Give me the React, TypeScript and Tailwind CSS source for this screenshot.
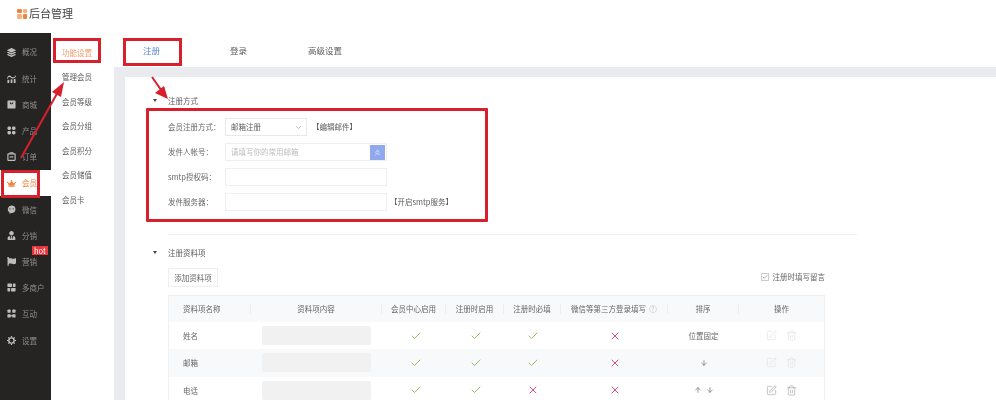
import { Check, ChevronDown, SquarePen, Trash2, X, ArrowUp, ArrowDown, ChevronsUp } from "lucide-react";
import { FaLayerGroup, FaCrown, FaFlag, FaUserTie } from "react-icons/fa";

type IconProps = { className?: string };

function ChartIcon({ className }: IconProps) {
  return (
    <svg className={className} viewBox="0 0 10 10" fill="currentColor">
      <path d="M0 4.5 C1.5 1 3 1 5 3 C7 4.5 8.5 3 10 1 V2.6 C8.5 5 6.5 6 4.6 4.2 C3 2.8 1.6 3 0 6 Z" />
      <rect x="0.5" y="6.5" width="2" height="3.5" />
      <rect x="4" y="6" width="2" height="4" />
      <rect x="7.5" y="5.5" width="2" height="4.5" />
    </svg>
  );
}

function StoreIcon({ className }: IconProps) {
  return (
    <svg className={className} viewBox="0 0 10 10" fill="currentColor">
      <path d="M1.5 0.5 H8.5 A1 1 0 0 1 9.5 1.5 V8.5 A1 1 0 0 1 8.5 9.5 H1.5 A1 1 0 0 1 0.5 8.5 V1.5 A1 1 0 0 1 1.5 0.5 Z M3 2.5 C3 5.5 7 5.5 7 2.5 H6 C6 4.2 4 4.2 4 2.5 Z" fillRule="evenodd" />
    </svg>
  );
}

function ProductIcon({ className }: IconProps) {
  return (
    <svg className={className} viewBox="0 0 10 10" fill="currentColor">
      <rect x="0.5" y="0.5" width="4" height="4" rx="1.6" />
      <rect x="5.5" y="0.5" width="4" height="4" rx="1.6" />
      <rect x="0.5" y="5.5" width="4" height="4" rx="1.6" />
      <rect x="5.5" y="5.5" width="4" height="4" rx="1.6" />
    </svg>
  );
}

function OrderIcon({ className }: IconProps) {
  return (
    <svg className={className} viewBox="0 0 10 10" fill="none" stroke="currentColor" strokeWidth="1.3">
      <rect x="1" y="2" width="8" height="7.3" rx="0.6" />
      <path d="M3.5 2 V0.8 H6.5 V2" />
      <path d="M3 5.5 H7" />
    </svg>
  );
}

function WechatIcon({ className }: IconProps) {
  return (
    <svg className={className} viewBox="0 0 10 10" fill="currentColor">
      <path
        d="M5 0.6 A4.4 4.1 0 0 1 5 8.8 L2.6 9.6 L2.8 8.1 A4.4 4.1 0 0 1 5 0.6 Z M3.2 3.6 A0.7 0.7 0 1 0 3.2 5 A0.7 0.7 0 1 0 3.2 3.6 Z M6.8 3.6 A0.7 0.7 0 1 0 6.8 5 A0.7 0.7 0 1 0 6.8 3.6 Z"
        fillRule="evenodd"
      />
    </svg>
  );
}

function MerchantIcon({ className }: IconProps) {
  return (
    <svg className={className} viewBox="0 0 10 10" fill="currentColor">
      <rect x="0.5" y="0.5" width="5" height="4" rx="0.5" />
      <rect x="6.5" y="0.5" width="3" height="4" rx="0.5" />
      <rect x="0.5" y="5.5" width="3" height="4" rx="0.5" />
      <rect x="4.5" y="5.5" width="5" height="4" rx="0.5" />
    </svg>
  );
}

function InteractIcon({ className }: IconProps) {
  return (
    <svg className={className} viewBox="0 0 10 10" fill="currentColor">
      <rect x="0.5" y="0.5" width="3.6" height="3.8" rx="1" />
      <rect x="5.9" y="0.5" width="3.6" height="3.8" rx="1" />
      <rect x="0.5" y="5.7" width="3.6" height="3.8" rx="0.6" />
      <rect x="5.9" y="5.7" width="3.6" height="3.8" rx="0.6" />
      <rect x="3.5" y="6.8" width="3" height="1.4" />
    </svg>
  );
}

function GearIcon({ className }: IconProps) {
  return (
    <svg className={className} viewBox="0 0 10 10" fill="none" stroke="currentColor">
      <circle cx="5" cy="5" r="2.9" strokeWidth="1.6" />
      <path d="M5 0 V1.6 M5 8.4 V10 M0 5 H1.6 M8.4 5 H10 M1.5 1.5 L2.6 2.6 M7.4 7.4 L8.5 8.5 M8.5 1.5 L7.4 2.6 M2.6 7.4 L1.5 8.5" strokeWidth="1.3" />
    </svg>
  );
}

const menu = [
  { label: "概况", icon: FaLayerGroup },
  { label: "统计", icon: ChartIcon },
  { label: "商城", icon: StoreIcon },
  { label: "产品", icon: ProductIcon },
  { label: "订单", icon: OrderIcon },
  { label: "会员", icon: FaCrown, active: true },
  { label: "微信", icon: WechatIcon },
  { label: "分销", icon: FaUserTie },
  { label: "营销", icon: FaFlag, hot: true },
  { label: "多商户", icon: MerchantIcon },
  { label: "互动", icon: InteractIcon },
  { label: "设置", icon: GearIcon },
];

const subMenu = ["功能设置", "管理会员", "会员等级", "会员分组", "会员积分", "会员储值", "会员卡"];

const columns = "grid grid-cols-[82px_131px_64px_58px_57px_107px_71px_85px]";

const headers = ["资料项名称", "资料项内容", "会员中心启用", "注册时启用", "注册时必填", "微信等第三方登录填写", "排序", "操作"];

const rows = [
  { name: "姓名", marks: [true, true, true, false], sort: "位置固定", faded: true },
  { name: "邮箱", marks: [true, true, true, false], sort: "down", faded: true },
  { name: "电话", marks: [true, true, false, false], sort: "both", faded: false },
];

function Mark({ ok }: { ok: boolean }) {
  return (
    <div className="flex justify-center">
      {ok ? (
        <Check className="h-3 w-3 text-[#85b84e]" strokeWidth={1.75} />
      ) : (
        <X className="h-3 w-3 text-[#d9346b]" strokeWidth={1.75} />
      )}
    </div>
  );
}

function Logo() {
  return (
    <div className="grid grid-cols-2 gap-[1px] w-[10px]">
      <span className="h-[4.5px] w-[4.5px] rounded-[1px] bg-[#f0843e]" />
      <span className="h-[4.5px] w-[4.5px] rounded-[1px] bg-[#f5b183]" />
      <span className="h-[4.5px] w-[4.5px] rounded-[1px] bg-[#f5b183]" />
      <span className="h-[4.5px] w-[4.5px] rounded-[1px] bg-[#f0843e]" />
    </div>
  );
}

function Sidebar() {
  return (
    <div className="w-[51px] bg-[#262422] pt-[6px] shrink-0">
      {menu.map((item) => {
        const Icon = item.icon;
        return (
          <div
            key={item.label}
            className={
              "relative h-[26.2px] flex items-center pl-[7px] gap-[6px] text-[7.5px] " +
              (item.active ? "bg-white text-[#f0803c]" : "text-[#8f8f8f]")
            }
          >
            <Icon className={"h-[9px] w-[9px] shrink-0 " + (item.active ? "text-[#f0803c]" : "text-[#bdbdbd]")} />
            <span className="whitespace-nowrap">{item.label}</span>
            {item.hot && (
              <span className="absolute left-[32px] top-[-3px] h-[9px] px-[2px] bg-[#e8363f] text-white text-[7.5px] leading-[9px]">
                hot
              </span>
            )}
          </div>
        );
      })}
    </div>
  );
}

function SubMenu() {
  return (
    <div className="w-[63px] bg-white pt-[7px] shrink-0">
      {subMenu.map((label, i) => (
        <div
          key={label}
          className={
            "h-[24.5px] flex items-center pl-[11px] text-[7.5px] " +
            (i === 0 ? "text-[#f59a68]" : "text-[#5c5c5c]")
          }
        >
          {label}
        </div>
      ))}
    </div>
  );
}

function FormRow({ label, children }: { label: string; children: React.ReactNode }) {
  return (
    <div className="flex items-center h-[18px]">
      <span className="w-[57px] shrink-0 text-[#666666] whitespace-nowrap">{label}</span>
      {children}
    </div>
  );
}

function SectionTitle({ title }: { title: string }) {
  return (
    <div className="relative flex items-center h-[12px] text-[#5c5c5c]">
      <span className="absolute left-[-15px] top-[4px] h-0 w-0 border-x-[2.5px] border-t-[3px] border-x-transparent border-t-[#444444]" />
      {title}
    </div>
  );
}

function RegisterMethod() {
  return (
    <div className="pl-[43px] pr-[139px]">
      <SectionTitle title="注册方式" />
      <div className="mt-[11px] flex flex-col gap-[7px] pb-[23px] border-b border-[#f0f0f0]">
        <FormRow label="会员注册方式：">
          <div className="w-[82px] h-[18px] border border-[#e8e8e8] flex items-center justify-between pl-[5px] pr-[3px] text-[#5c5c5c]">
            邮箱注册
            <ChevronDown className="h-[9px] w-[9px] text-[#aaaaaa]" />
          </div>
          <span className="ml-[5px] text-[#5c5c5c]">【编辑邮件】</span>
        </FormRow>
        <FormRow label="发件人帐号：">
          <div className="w-[162px] h-[18px] border border-[#eeeeee] flex items-center justify-between pl-[5px] text-[#bdbdbd]">
            请填写你的常用邮箱
            <span className="h-[15px] w-[15px] mr-[1px] bg-[#8fa8ee] flex items-center justify-center">
              <ChevronsUp className="h-[9px] w-[9px] text-white" />
            </span>
          </div>
        </FormRow>
        <FormRow label="smtp授权码：">
          <div className="w-[162px] h-[18px] border border-[#eeeeee]" />
        </FormRow>
        <FormRow label="发件服务器：">
          <div className="w-[162px] h-[18px] border border-[#eeeeee]" />
          <span className="ml-[3px] text-[#5c5c5c]">【开启smtp服务】</span>
        </FormRow>
      </div>
    </div>
  );
}

function Table() {
  return (
    <div className="mt-[8px] border border-[#f0f0f0]">
      <div className={columns + " h-[26px] bg-[#f8f9fb] items-center text-[#666666]"}>
        {headers.map((h, i) => (
          <div
            key={h}
            className={
              "flex items-center gap-[3px] h-[10px] border-r border-[#eeeeee] last:border-r-0 whitespace-nowrap " +
              (i === 0 ? "pl-[14px]" : "justify-center")
            }
          >
            {h}
            {i === 5 && (
              <span className="h-[8px] w-[8px] rounded-full border border-[#dddddd] text-[6px] leading-[6px] text-center text-[#bbbbbb]">
                ?
              </span>
            )}
          </div>
        ))}
      </div>
      {rows.map((row, r) => (
        <div key={row.name} className={columns + " h-[27.3px] items-center " + (r === 1 ? "bg-[#f8f9fb]" : "bg-white")}>
          <div className="pl-[14px] text-[#666666]">{row.name}</div>
          <div className="pl-[11px]">
            <div className="h-[19px] w-[109px] rounded-[2px] bg-[#f1f1f1]" />
          </div>
          {row.marks.map((ok, i) => (
            <div key={i} className={i === 0 ? "pl-[3px]" : i === 1 ? "pl-[2px]" : ""}>
              <Mark ok={ok} />
            </div>
          ))}
          <div className="flex justify-center items-center gap-[4px] text-[#666666]">
            {row.sort === "both" && <ArrowUp className="h-[8px] w-[8px]" />}
            {row.sort === "down" || row.sort === "both" ? <ArrowDown className="h-[8px] w-[8px]" /> : row.sort}
          </div>
          <div className={"flex justify-center gap-[9px] " + (row.faded ? "text-[#dddddd]" : "text-[#9a9a9a]")}>
            <SquarePen className="h-[11px] w-[11px]" strokeWidth={1.25} />
            <Trash2 className="h-[11px] w-[11px]" strokeWidth={1.25} />
          </div>
        </div>
      ))}
    </div>
  );
}

function Annotations() {
  return (
    <div className="absolute inset-0 pointer-events-none">
      <div className="absolute left-[53px] top-[38px] w-[48px] h-[25px] border-[3px] border-[#d7202c]" />
      <div className="absolute left-[1px] top-[170px] w-[39px] h-[28px] border-[3px] border-[#d7202c]" />
      <div className="absolute left-[123px] top-[38px] w-[59px] h-[28px] border-[3px] border-[#d7202c]" />
      <div className="absolute left-[146px] top-[108px] w-[342px] h-[114px] border-[3px] border-[#d7202c] rounded-[1px]" />
      <svg className="absolute inset-0" width="996" height="400" viewBox="0 0 996 400">
        <path d="M21 158 L59 90" stroke="#d7202c" strokeWidth="2" fill="none" />
        <path d="M64 82 L61 97 L52 92 Z" fill="#d7202c" />
        <path d="M152 77 L164 94" stroke="#d7202c" strokeWidth="2" fill="none" />
        <path d="M168 99 L155 93 L164 86 Z" fill="#d7202c" />
      </svg>
    </div>
  );
}

export default function App() {
  return (
    <div className="relative h-[400px] w-[996px] overflow-hidden bg-white blur-[0.35px] font-['Noto_Sans_CJK_SC','Liberation_Sans',sans-serif] text-[7.5px]">
      {/* Header */}
      <div className="h-[33px] flex items-center gap-[2px] pl-[17px] pb-[6px] text-[11px] text-[#444444]">
        <Logo />
        后台管理
      </div>

      <div className="flex h-[367px]">
        <Sidebar />
        <SubMenu />

        <div className="flex-1 min-w-0 bg-[#e9ebee]">
          {/* Tabs */}
          <div className="h-[34px] bg-white flex items-center text-[8.5px] text-[#5c5c5c]">
            <span className="ml-[29px] text-[#5b86d6]">注册</span>
            <span className="ml-[70px]">登录</span>
            <span className="ml-[61px]">高级设置</span>
          </div>

          <div className="mt-[10px] ml-[11px] h-[323px] bg-white pt-[18px]">
            <RegisterMethod />

            <div className="pl-[43px] pr-[171px] mt-[12px]">
              <SectionTitle title="注册资料项" />
              <div className="mt-[9px] flex items-center justify-between">
                <div className="h-[19px] w-[50px] border border-[#eeeeee] flex items-center justify-center text-[#666666]">
                  添加资料项
                </div>
                <div className="flex items-center gap-[4px] mt-[-2px] text-[#666666]">
                  <span className="h-[8px] w-[8px] border border-[#cccccc] flex items-center justify-center">
                    <Check className="h-[6px] w-[6px] text-[#555555]" />
                  </span>
                  注册时填写留言
                </div>
              </div>
              <Table />
            </div>
          </div>
        </div>
      </div>

      <Annotations />
    </div>
  );
}
